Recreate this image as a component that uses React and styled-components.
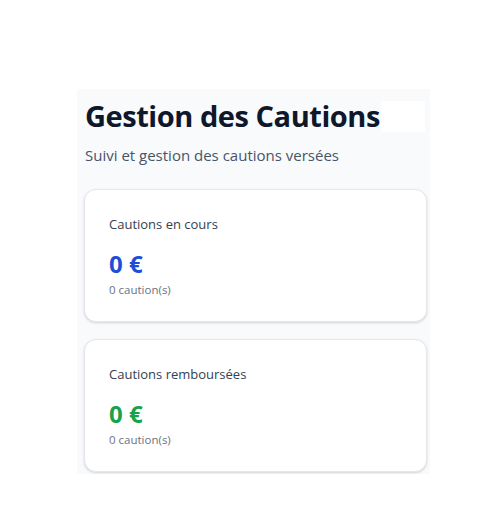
import React from 'react';
import styled, { createGlobalStyle } from 'styled-components';

const GlobalStyle = createGlobalStyle`
  body {
    margin: 0;
    background: #ffffff;
    font-family: "Open Sans", "Noto Sans", Arial, sans-serif;
  }
`;

const Page = styled.div`
  padding: 89px 0 0 77px;
`;

const Panel = styled.div`
  width: 353px;
  background: #f8fafc;
  padding: 6px 3px 2px 7px;
  box-sizing: border-box;
`;

const Header = styled.div`
  padding-left: 1px;
  margin-bottom: 23px;
`;

const TitleRow = styled.div`
  display: flex;
  align-items: center;
  white-space: nowrap;
`;

const Title = styled.h1`
  margin: 0;
  font-size: 29px;
  line-height: 42px;
  font-weight: 700;
  letter-spacing: -0.45px;
  color: #0f172a;
`;

const Patch = styled.span`
  display: inline-block;
  width: 44px;
  height: 31px;
  margin-left: 1px;
  background: #ffffff;
`;

const Subtitle = styled.p`
  margin: 7px 0 0;
  font-size: 15px;
  line-height: 22px;
  color: #475569;
`;

const Cards = styled.div`
  display: flex;
  flex-direction: column;
  gap: 17px;
`;

const Card = styled.div`
  background: #ffffff;
  border: 1px solid #e5e7eb;
  border-radius: 12px;
  box-shadow: 0 1px 3px rgba(0, 0, 0, 0.1), 0 1px 2px rgba(0, 0, 0, 0.06);
  padding: 24px;
  height: 133px;
  box-sizing: border-box;
`;

const CardLabel = styled.div`
  font-size: 13px;
  line-height: 20px;
  font-weight: 500;
  color: #334155;
`;

const Amount = styled.div`
  margin-top: 16px;
  font-size: 24px;
  line-height: 28px;
  font-weight: 700;
  color: ${p => p.$color};
`;

const Count = styled.div`
  margin-top: 4px;
  font-size: 11.5px;
  line-height: 16px;
  color: #6b7280;
`;

const stats = [
  { label: 'Cautions en cours', amount: '0 €', count: '0 caution(s)', color: '#1d4ed8' },
  { label: 'Cautions remboursées', amount: '0 €', count: '0 caution(s)', color: '#16a34a' },
];

export default function App() {
  return (
    <>
      <GlobalStyle />
      <Page>
        <Panel>
          <Header>
            <TitleRow>
              <Title>Gestion des Cautions</Title>
              <Patch />
            </TitleRow>
            <Subtitle>Suivi et gestion des cautions versées</Subtitle>
          </Header>
          <Cards>
            {stats.map(s => (
              <Card key={s.label}>
                <CardLabel>{s.label}</CardLabel>
                <Amount $color={s.color}>{s.amount}</Amount>
                <Count>{s.count}</Count>
              </Card>
            ))}
          </Cards>
        </Panel>
      </Page>
    </>
  );
}
